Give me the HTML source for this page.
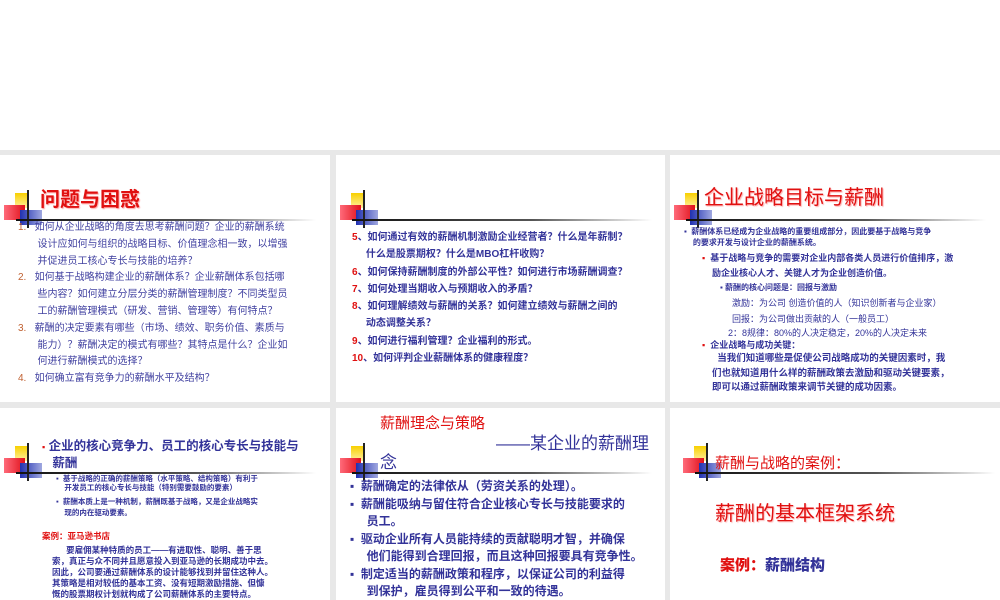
<!DOCTYPE html>
<html><head><meta charset="utf-8"><style>
*{margin:0;padding:0;box-sizing:border-box}
body{width:1000px;height:600px;overflow:hidden;background:#e8e8e8;position:relative;font-family:"Liberation Sans","Noto Sans CJK SC",sans-serif}
.top{position:absolute;left:0;top:0;width:1000px;height:150px;background:#fff}
.s{position:absolute;background:#fff;overflow:hidden}
.y{position:absolute;left:15px;top:38px;width:12px;height:15px;background:linear-gradient(#f8d000,#fff0a0)}
.r{position:absolute;left:4px;top:50px;width:21px;height:15px;background:linear-gradient(90deg,#ff6a7a,#e0101a)}
.b{position:absolute;left:20px;top:55px;width:22px;height:15px;background:linear-gradient(90deg,#2030b0,#a0a8e0)}
.v{position:absolute;left:27px;top:35px;width:1.5px;height:38px;background:#222}
.h{position:absolute;left:16px;top:64px;width:300px;height:1.5px;background:linear-gradient(90deg,#111,#555 60%,rgba(200,200,200,0))}
.t{position:absolute;white-space:nowrap;color:#333399;font-weight:bold}
.red{color:#e01010}
.n{color:#c06030;font-weight:normal}
</style></head><body>
<div class="top"></div>

<div class="s" style="left:0;top:155px;width:330px;height:247px">
<div class="y"></div><div class="r"></div><div class="b"></div><div class="v"></div><div class="h"></div>
<div class="t red" style="left:40px;top:28px;font-size:20px;text-shadow:1px 1px 1px #faa">问题与困惑</div>
<div class="t" style="left:18px;top:65px;font-size:10px;line-height:16.8px;font-weight:normal;color:#4040a0">
<span class="n">1.</span>&nbsp;&nbsp;&nbsp;如何从企业战略的角度去思考薪酬问题？企业的薪酬系统<br>&nbsp;&nbsp;&nbsp;&nbsp;&nbsp;&nbsp;&nbsp;设计应如何与组织的战略目标、价值理念相一致，以增强<br>&nbsp;&nbsp;&nbsp;&nbsp;&nbsp;&nbsp;&nbsp;并促进员工核心专长与技能的培养？<br>
<span class="n">2.</span>&nbsp;&nbsp;&nbsp;如何基于战略构建企业的薪酬体系？企业薪酬体系包括哪<br>&nbsp;&nbsp;&nbsp;&nbsp;&nbsp;&nbsp;&nbsp;些内容？如何建立分层分类的薪酬管理制度？不同类型员<br>&nbsp;&nbsp;&nbsp;&nbsp;&nbsp;&nbsp;&nbsp;工的薪酬管理模式（研发、营销、管理等）有何特点？<br>
<span class="n">3.</span>&nbsp;&nbsp;&nbsp;薪酬的决定要素有哪些（市场、绩效、职务价值、素质与<br>&nbsp;&nbsp;&nbsp;&nbsp;&nbsp;&nbsp;&nbsp;能力）？薪酬决定的模式有哪些？其特点是什么？企业如<br>&nbsp;&nbsp;&nbsp;&nbsp;&nbsp;&nbsp;&nbsp;何进行薪酬模式的选择？<br>
<span class="n">4.</span>&nbsp;&nbsp;&nbsp;如何确立富有竞争力的薪酬水平及结构？</div>
</div>

<div class="s" style="left:336px;top:155px;width:329px;height:247px">
<div class="y"></div><div class="r"></div><div class="b"></div><div class="v"></div><div class="h"></div>
<div class="t" style="left:16px;top:74px;font-size:10px;line-height:17.3px">
<span class="red">5</span>、如何通过有效的薪酬机制激励企业经营者？什么是年薪制？<br>&nbsp;&nbsp;&nbsp;&nbsp;&nbsp;什么是股票期权？什么是MBO杠杆收购？<br>
<span class="red">6</span>、如何保持薪酬制度的外部公平性？如何进行市场薪酬调查？<br>
<span class="red">7</span>、如何处理当期收入与预期收入的矛盾？<br>
<span class="red">8</span>、如何理解绩效与薪酬的关系？如何建立绩效与薪酬之间的<br>&nbsp;&nbsp;&nbsp;&nbsp;&nbsp;动态调整关系？<br>
<span class="red">9</span>、如何进行福利管理？企业福利的形式。<br>
<span class="red">10</span>、如何评判企业薪酬体系的健康程度？</div>
</div>

<div class="s" style="left:670px;top:155px;width:330px;height:247px">
<div class="y"></div><div class="r"></div><div class="b"></div><div class="v"></div><div class="h"></div>
<div class="t red" style="left:34px;top:26px;font-size:20px;font-weight:normal;text-shadow:1px 1px 1px #faa">企业战略目标与薪酬</div>
<div class="t" style="left:14px;top:71px;font-size:8px;line-height:11px">▪&nbsp;&nbsp;薪酬体系已经成为企业战略的重要组成部分，因此要基于战略与竞争<br>&nbsp;&nbsp;&nbsp;&nbsp;的要求开发与设计企业的薪酬系统。</div>
<div class="t" style="left:32px;top:96px;font-size:9px;line-height:15px"><span class="red">▪</span>&nbsp;&nbsp;基于战略与竞争的需要对企业内部各类人员进行价值排序，激<br>&nbsp;&nbsp;&nbsp;&nbsp;励企业核心人才、关键人才为企业创造价值。</div>
<div class="t" style="left:50px;top:126px;font-size:8px;line-height:14px">▪&nbsp;薪酬的核心问题是：回报与激励</div>
<div class="t" style="left:62px;top:140px;font-size:9px;line-height:16px;font-weight:normal">激励：为公司 创造价值的人（知识创新者与企业家）<br>回报：为公司做出贡献的人（一般员工）</div>
<div class="t" style="left:58px;top:171px;font-size:9px;font-weight:normal">2：8规律：80%的人决定稳定，20%的人决定未来</div>
<div class="t" style="left:32px;top:184px;font-size:9px;line-height:12px"><span class="red">▪</span>&nbsp;&nbsp;企业战略与成功关键：</div>
<div class="t" style="left:42px;top:197px;font-size:9.5px;line-height:14.5px">&nbsp;&nbsp;当我们知道哪些是促使公司战略成功的关键因素时，我<br>们也就知道用什么样的薪酬政策去激励和驱动关键要素，<br>即可以通过薪酬政策来调节关键的成功因素。</div>
</div>

<div class="s" style="left:0;top:408px;width:330px;height:192px">
<div class="y"></div><div class="r"></div><div class="b"></div><div class="v"></div><div class="h"></div>
<div class="t" style="left:42px;top:30px;font-size:12.5px;line-height:16px"><span class="red" style="font-size:9px">▪</span>&nbsp;企业的核心竞争力、员工的核心专长与技能与<br>&nbsp;&nbsp;&nbsp;薪酬</div>
<div class="t" style="left:56px;top:66px;font-size:7.5px;line-height:9px">▪&nbsp;&nbsp;基于战略的正确的薪酬策略（水平策略、结构策略）有利于<br>&nbsp;&nbsp;&nbsp;&nbsp;开发员工的核心专长与技能（特别需要鼓励的要素）</div>
<div class="t" style="left:56px;top:88px;font-size:7.5px;line-height:11px">▪&nbsp;&nbsp;薪酬本质上是一种机制，薪酬既基于战略，又是企业战略实<br>&nbsp;&nbsp;&nbsp;&nbsp;现的内在驱动要素。</div>
<div class="t red" style="left:42px;top:122px;font-size:8.5px">案例：亚马逊书店</div>
<div class="t" style="left:52px;top:137px;font-size:8.5px;line-height:11px">&nbsp;&nbsp;&nbsp;&nbsp;&nbsp;&nbsp;要雇佣某种特质的员工——有进取性、聪明、善于思<br>索，真正与众不同并且愿意投入到亚马逊的长期成功中去。<br>因此，公司要通过薪酬体系的设计能够找到并留住这种人。<br>其策略是相对较低的基本工资、没有短期激励措施、但慷<br>慨的股票期权计划就构成了公司薪酬体系的主要特点。</div>
</div>

<div class="s" style="left:336px;top:408px;width:329px;height:192px">
<div class="y"></div><div class="r"></div><div class="b"></div><div class="v"></div><div class="h"></div>
<div class="t red" style="left:44px;top:4px;font-size:15px;font-weight:normal">薪酬理念与策略</div>
<div class="t" style="left:160px;top:21px;font-size:17px;font-weight:normal">——某企业的薪酬理</div>
<div class="t" style="left:44px;top:40px;font-size:17px;font-weight:normal">念</div>
<div class="t" style="left:14px;top:70px;font-size:12px;line-height:17.5px">▪&nbsp;&nbsp;薪酬确定的法律依从（劳资关系的处理）。<br>▪&nbsp;&nbsp;薪酬能吸纳与留住符合企业核心专长与技能要求的<br>&nbsp;&nbsp;&nbsp;&nbsp;&nbsp;员工。<br>▪&nbsp;&nbsp;驱动企业所有人员能持续的贡献聪明才智，并确保<br>&nbsp;&nbsp;&nbsp;&nbsp;&nbsp;他们能得到合理回报，而且这种回报要具有竞争性。<br>▪&nbsp;&nbsp;制定适当的薪酬政策和程序，以保证公司的利益得<br>&nbsp;&nbsp;&nbsp;&nbsp;&nbsp;到保护，雇员得到公平和一致的待遇。</div>
</div>

<div class="s" style="left:670px;top:408px;width:330px;height:192px">
<div class="y" style="left:24px"></div><div class="r" style="left:13px"></div><div class="b" style="left:29px"></div><div class="v" style="left:36px"></div><div class="h" style="left:25px"></div>
<div class="t red" style="left:45px;top:44px;font-size:15px;font-weight:normal">薪酬与战略的案例：</div>
<div class="t red" style="left:45px;top:89px;font-size:20px;font-weight:normal;text-shadow:1px 1px 1px #fbb">薪酬的基本框架系统</div>
<div class="t" style="left:50px;top:146px;font-size:15px;font-weight:900"><span class="red">案例：</span>薪酬结构</div>
</div>
</body></html>
